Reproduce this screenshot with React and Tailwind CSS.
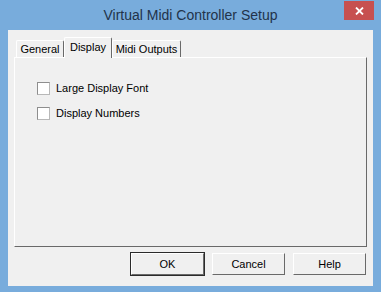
import React from 'react';

// Classic Win32 3D edges
const raised = 'border border-t-white border-l-white border-r-[#696969] border-b-[#696969]';

const Tab = ({ label, selected, width }) => (
  <div
    className={
      (selected
        ? 'relative z-10 -mb-px h-[21px] pt-[2px] '
        : 'h-[17px] pt-[1px] ') +
      'flex justify-center bg-[#f0f0f0] border-t border-l border-r border-t-white border-l-white border-r-[#696969] rounded-t-[2px] ' +
      width
    }
  >
    <span className="leading-[14px]">{label}</span>
  </div>
);

const CheckRow = ({ label }) => (
  <div className="flex items-center h-[13px]">
    <div className="w-[13px] h-[13px] bg-white border border-t-[#8e8e8e] border-l-[#8e8e8e] border-r-[#b8b8b8] border-b-[#b8b8b8]" />
    <span className="ml-[6px] leading-[13px]">{label}</span>
  </div>
);

const Button = ({ label, isDefault }) => (
  <div className={isDefault ? 'border border-[#2b2b2b]' : 'border border-transparent'}>
    <div className={`${raised} w-[73px] h-[22px] flex items-center justify-center bg-[#f0f0f0]`}>
      <span>{label}</span>
    </div>
  </div>
);

export default function App() {
  return (
    <div
      className="w-[381px] h-[292px] bg-[#78acdc] flex flex-col text-[11px] text-black"
      style={{ fontFamily: '"Liberation Sans", Arial, sans-serif' }}
    >
      {/* title bar */}
      <div className="relative h-[30px] flex items-center justify-center">
        <span className="text-[14px] text-[#22334a] pt-[1px]">Virtual Midi Controller Setup</span>
        <div className="absolute right-[7px] top-[1px] w-[30px] h-[19px] bg-[#c75050] flex items-center justify-center">
          <svg width="9" height="8" viewBox="0 0 9 8">
            <path d="M1 0.5 L8 7.5 M8 0.5 L1 7.5" stroke="white" strokeWidth="1.8" />
          </svg>
        </div>
      </div>

      {/* client area */}
      <div className="flex-1 mx-[8px] mb-[6px] bg-[#f0f0f0] flex flex-col px-[6px] pt-[7px]">
        <div className="flex items-end h-[20px] pl-[2px]">
          <Tab label="General" width="w-[48px]" />
          <Tab label="Display" width="w-[48px]" selected />
          <Tab label="Midi Outputs" width="w-[69px]" />
        </div>
        <div className="h-[190px] bg-[#f0f0f0] border border-t-white border-l-white border-r-[#696969] border-b-[#696969] flex flex-col gap-[12px] pl-[22px] pt-[24px]">
          <CheckRow label="Large Display Font" />
          <CheckRow label="Display Numbers" />
        </div>
        <div className="flex justify-end gap-[6px] mt-[5px]">
          <Button label="OK" isDefault />
          <Button label="Cancel" />
          <Button label="Help" />
        </div>
      </div>
    </div>
  );
}
